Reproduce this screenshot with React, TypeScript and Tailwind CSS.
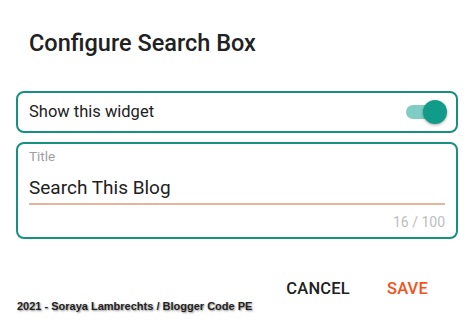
import React from "react";

export default function App() {
  return (
    <div
      className="w-[474px] h-[329px] bg-white relative overflow-hidden"
      style={{ fontFamily: "Roboto, 'Noto Sans', sans-serif" }}
    >
      <div className="pt-[28px] pl-[29px]">
        <h1 className="text-[23.5px] leading-[31px] font-medium text-[#212121]">
          Configure Search Box
        </h1>
      </div>

      <div className="px-[16px] mt-[32px] flex flex-col gap-[9px]">
        <div className="h-[42px] border-2 border-[#16917f] rounded-[8px] flex items-center justify-between pl-[11px] pr-[12px]">
          <span className="text-[16.5px] text-[#212121]">Show this widget</span>
          <div className="relative w-[38px] h-[24px] flex items-center">
            <div className="w-[36px] h-[14px] rounded-full bg-[#80cdc3]" />
            <div className="absolute right-[-3px] top-[0px] w-[24px] h-[24px] rounded-full bg-[#119c89] shadow-[0_1px_3px_rgba(0,0,0,0.35)]" />
          </div>
        </div>

        <div className="h-[97px] border-2 border-[#16917f] rounded-[8px] px-[11px] pt-[4px]">
          <div className="text-[13.5px] leading-[16px] text-[#9e9e9e]">Title</div>
          <div className="mt-[12px] text-[19px] leading-[24px] text-[#212121]">
            Search This Blog
          </div>
          <div className="mt-[3px] h-[2px] bg-[#eab49a]" />
          <div className="mt-[9px] text-right text-[14px] leading-[16px] text-[#bdbdbd]">
            16 / 100
          </div>
        </div>
      </div>

      <div className="flex justify-end items-center pr-[46px] mt-[38px] gap-[37px]">
        <span className="text-[16.5px] font-medium text-[#212121] tracking-[0.2px]">CANCEL</span>
        <span className="text-[16.5px] font-medium text-[#f4511e] tracking-[0.2px]">SAVE</span>
      </div>

      <div
        className="absolute left-[17px] top-[298px] text-[11px] font-bold text-[#222] [text-shadow:1px_1px_2px_rgba(0,0,0,0.45)]"
        style={{ fontFamily: "'Liberation Sans', Arial, sans-serif" }}
      >
        2021 - Soraya Lambrechts / Blogger Code PE
      </div>
    </div>
  );
}
